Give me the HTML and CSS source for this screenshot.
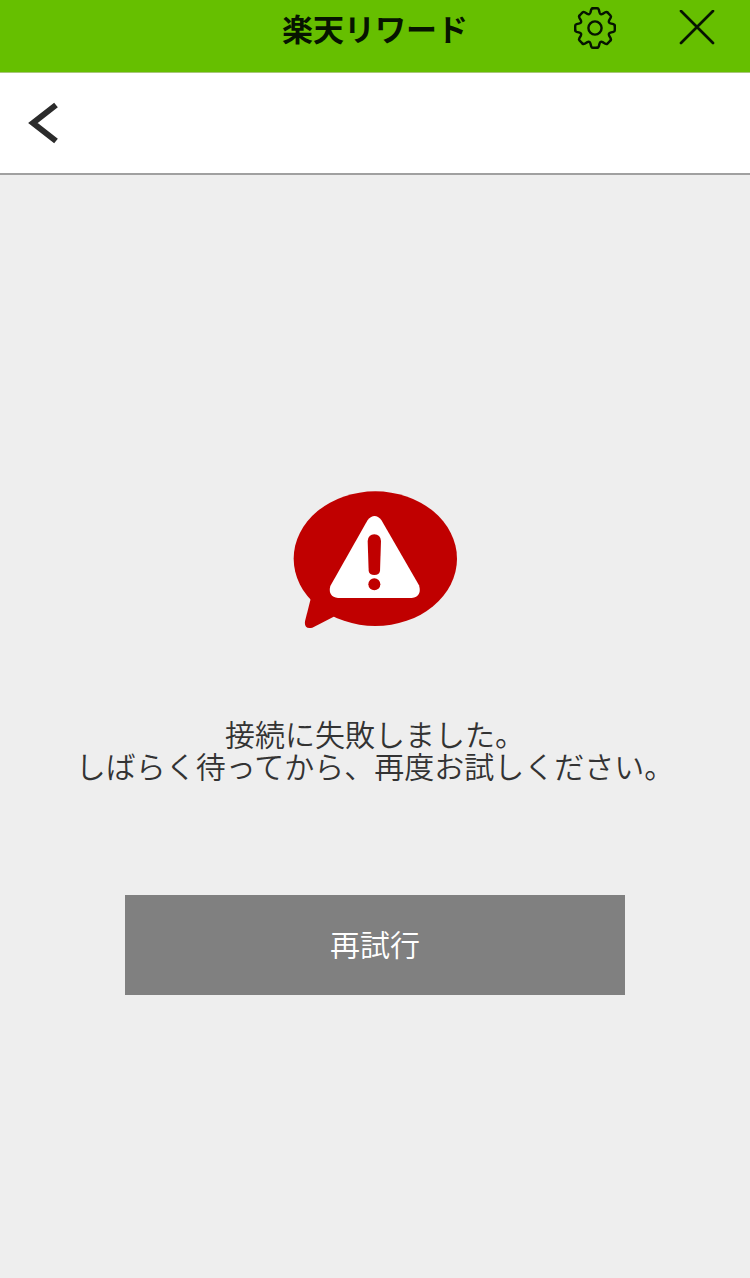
FILE: index.html
```
<!DOCTYPE html>
<html lang="ja">
<head>
    <meta charset="UTF-8">
    <meta name="viewport" content="width=device-width, initial-scale=1.0">
    <title>楽天リワード</title>
    <link rel="stylesheet" href="styles.css">
</head>
<body>
    <header class="header">
        <h1 class="title">楽天リワード</h1>
        <div class="actions">
            <button class="icon-button" type="button" aria-label="設定">
                <svg class="gear" viewBox="-22 -22 44 44">
                    <defs>
                        <path id="tooth" d="M-2.2 -19.8 H2.2 Q3.4 -19.8 3.8 -18.4 L4.6 -15.4 Q5.4 -13.1 7.64 -14.14 L10.32 -15.7 Q11.6 -16.4 12.44 -15.56"/>
                    </defs>
                    <use href="#tooth"/>
                    <use href="#tooth" transform="rotate(45)"/>
                    <use href="#tooth" transform="rotate(90)"/>
                    <use href="#tooth" transform="rotate(135)"/>
                    <use href="#tooth" transform="rotate(180)"/>
                    <use href="#tooth" transform="rotate(225)"/>
                    <use href="#tooth" transform="rotate(270)"/>
                    <use href="#tooth" transform="rotate(315)"/>
                    <circle r="6.6"/>
                </svg>
            </button>
            <button class="icon-button" type="button" aria-label="閉じる">
                <svg class="close" viewBox="0 0 36 36">
                    <path d="M2 1 L34 33 M34 1 L2 33"/>
                </svg>
            </button>
        </div>
    </header>
    <nav class="nav">
        <button class="icon-button" type="button" aria-label="戻る">
            <svg class="back" viewBox="0 0 32 42">
                <path d="M28 3 L5 21 L28 39"/>
            </svg>
        </button>
    </nav>
    <main class="error">
        <svg class="bubble" viewBox="40 30 495 417" aria-hidden="true">
            <ellipse class="red" cx="287" cy="236" rx="245" ry="202"/>
            <path class="red" d="M93 357 L76 424 Q73 449 98 443 L162 410 L200 330 Z"/>
            <path class="white" d="M264 120 Q285 96 305 120 L418 316 Q428 350 396 354 H175 Q144 350 152 318 Z"/>
            <path class="red" d="M264 183 Q266 163 284 163 Q302 163 304 183 L301 273 Q299 285 284 285 Q269 285 267 273 Z"/>
            <circle class="red" cx="284" cy="313" r="18"/>
        </svg>
        <p class="message">接続に失敗しました。<br>しばらく待ってから、再度お試しください。</p>
        <button class="retry" type="button">再試行</button>
    </main>
</body>
</html>
```
FILE: styles.css
```
* {
    box-sizing: border-box;
}

body {
    display: flex;
    flex-direction: column;
    min-height: 100vh;
    margin: 0;
    background-color: #eeeeee;
    color: #333333;
    font-family: "Noto Sans CJK JP", sans-serif;
}

.header {
    display: grid;
    grid-template-columns: 1fr auto 1fr;
    align-items: center;
    padding: 0 35px 16px;
    border-bottom: 1px solid #a9c67c;
    background-color: #66bf00;
    color: #061400;
}

.title {
    grid-column: 2;
    margin: 0;
    font-size: 31px;
    font-weight: 700;
    line-height: 56px;
}

.actions {
    display: flex;
    align-items: center;
    justify-content: flex-end;
    gap: 62px;
}

.icon-button {
    display: flex;
    padding: 0;
    border: none;
    background: none;
    color: inherit;
    cursor: pointer;
}

.icon-button svg {
    fill: none;
    stroke: currentColor;
}

.gear {
    width: 44px;
    height: 44px;
    stroke-width: 2.4;
    stroke-linecap: round;
}

.close {
    width: 36px;
    height: 36px;
    stroke-width: 2.7;
    stroke-linecap: round;
}

.nav {
    display: flex;
    align-items: center;
    height: 102px;
    padding: 0 28px;
    border-bottom: 2px solid #a0a0a0;
    background-color: #ffffff;
    color: #2b2b2b;
}

.back {
    width: 32px;
    height: 42px;
    stroke-width: 6;
}

.error {
    display: flex;
    flex: 1;
    flex-direction: column;
    align-items: center;
    padding: 315px 16px 48px;
}

.bubble {
    width: 165px;
    height: 139px;
}

.red {
    fill: #c00000;
}

.white {
    fill: #ffffff;
}

.message {
    margin: 88px 0 114px;
    font-size: 30px;
    font-weight: 350;
    line-height: 32px;
    text-align: center;
}

.retry {
    width: 100%;
    max-width: 500px;
    height: 100px;
    padding: 0 0 4px;
    border: none;
    background-color: #808080;
    color: #ffffff;
    font-family: inherit;
    font-size: 30px;
    font-weight: 350;
    cursor: pointer;
}
```
